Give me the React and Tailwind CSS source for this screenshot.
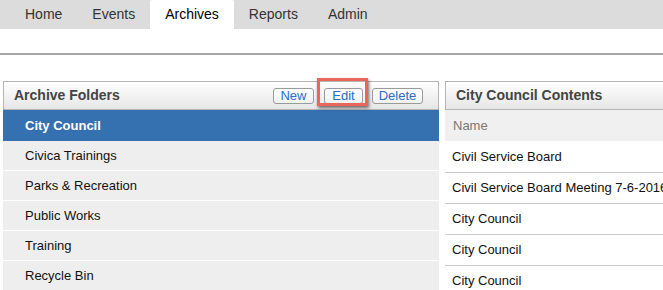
import React from 'react';

const tabs = ['Home', 'Events', 'Archives', 'Reports', 'Admin'];
const folders = ['Civica Trainings', 'Parks & Recreation', 'Public Works', 'Training', 'Recycle Bin'];
const contents = ['Civil Service Board', 'Civil Service Board Meeting 7-6-2016', 'City Council', 'City Council', 'City Council'];

function Btn({ children, w }) {
  return (
    <button className={`h-[16px] ${w} rounded-[3px] border border-[#9a9a9a] bg-gradient-to-b from-white to-[#f1f1f1] text-[13px] leading-[14px] text-[#2a6fc4]`}>
      {children}
    </button>
  );
}

export default function App() {
  return (
    <div className="w-[663px] h-[290px] overflow-hidden bg-white text-[13px] text-[#111]" style={{ fontFamily: '"Liberation Sans", Arial, sans-serif' }}>
      {/* nav */}
      <div className="h-[29px] bg-[#dcdcdc] flex pl-[10px]">
        {tabs.map(t => (
          <div
            key={t}
            className={`px-[15px] flex items-center text-[14px] ${t === 'Archives' ? 'bg-white text-black rounded-t-[2px]' : 'text-[#333]'}`}
          >
            {t}
          </div>
        ))}
      </div>
      <div className="h-[24px]" />
      <div className="h-[2px] bg-[#a6a6a6]" />
      <div className="h-[26px]" />

      <div className="flex gap-[6px] pl-[3px]">
        {/* left panel */}
        <div className="w-[436px] shrink-0">
          <div className="h-[29px] border border-[#b4b4b4] bg-gradient-to-b from-white to-[#e6e6e6] flex items-center pl-[10px] pr-[15px]">
            <span className="font-bold text-[14px] text-[#444]">Archive Folders</span>
            <div className="ml-auto flex items-center">
              <Btn w="w-[41px]">New</Btn>
              <div className="relative ml-[10px]">
                <Btn w="w-[39px]">Edit</Btn>
                <span className="absolute left-[-7px] top-[-8px] w-[51px] h-[28px] border-[3px] border-[#e8665a] shadow-[1px_2px_3px_rgba(0,0,0,0.55)]" />
              </div>
              <div className="ml-[9px]">
                <Btn w="w-[51px]">Delete</Btn>
              </div>
            </div>
          </div>
          <div className="h-[31px] bg-[#3570b0] flex items-center pl-[22px] font-bold text-white">City Council</div>
          {folders.map(f => (
            <div key={f} className="h-[30px] bg-[#eeeeee] border-b border-white flex items-center pl-[22px]">{f}</div>
          ))}
        </div>

        {/* right panel */}
        <div className="w-[260px] shrink-0">
          <div className="h-[29px] border border-[#b4b4b4] bg-gradient-to-b from-white to-[#e6e6e6] flex items-center pl-[10px]">
            <span className="font-bold text-[14px] text-[#444] whitespace-nowrap">City Council Contents</span>
          </div>
          <div className="h-[31px] bg-[#f0f0f0] flex items-center pl-[8px] text-[#777]">Name</div>
          {contents.map((c, i) => (
            <div key={i} className={`h-[31px] flex items-center pl-[7px] whitespace-nowrap ${i > 0 ? 'border-t border-[#cccccc]' : ''}`}>{c}</div>
          ))}
        </div>
      </div>
    </div>
  );
}
